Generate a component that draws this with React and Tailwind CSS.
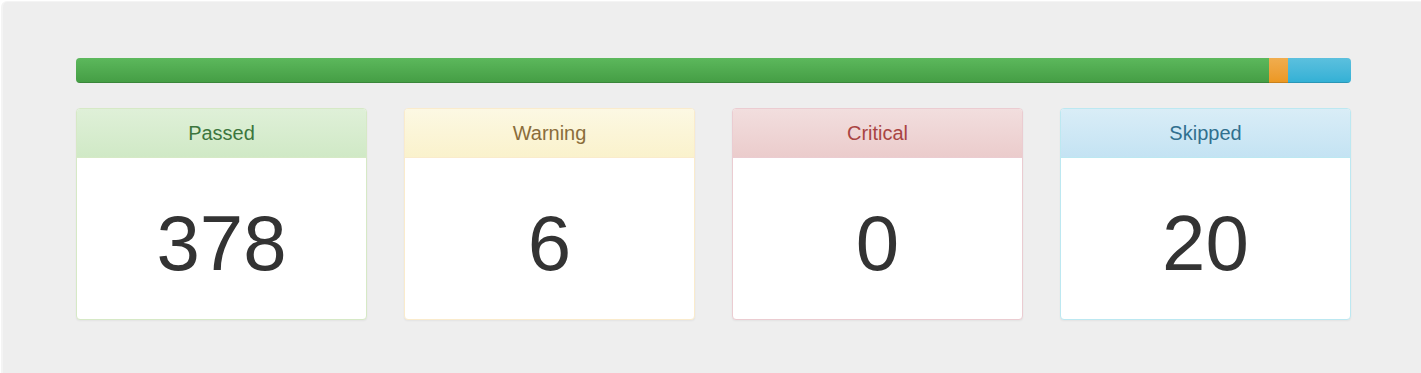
import React from 'react';

const results = [
  {
    label: 'Passed',
    count: 378,
    heading: 'bg-gradient-to-b from-[#dff0d8] to-[#d0e9c6] text-[#3c763d] border-[#d6e9c6]',
    border: 'border-[#d6e9c6]',
    bar: 'bg-gradient-to-b from-[#5cb85c] to-[#449d44]',
  },
  {
    label: 'Warning',
    count: 6,
    heading: 'bg-gradient-to-b from-[#fcf8e3] to-[#faf2cc] text-[#8a6d3b] border-[#faebcc]',
    border: 'border-[#faebcc]',
    bar: 'bg-gradient-to-b from-[#f0ad4e] to-[#ec971f]',
  },
  {
    label: 'Critical',
    count: 0,
    heading: 'bg-gradient-to-b from-[#f2dede] to-[#ebcccc] text-[#a94442] border-[#ebccd1]',
    border: 'border-[#ebccd1]',
    bar: 'bg-gradient-to-b from-[#d9534f] to-[#c9302c]',
  },
  {
    label: 'Skipped',
    count: 20,
    heading: 'bg-gradient-to-b from-[#d9edf7] to-[#c4e3f3] text-[#31708f] border-[#bce8f1]',
    border: 'border-[#bce8f1]',
    bar: 'bg-gradient-to-b from-[#5bc0de] to-[#31b0d5]',
  },
];

const total = results.reduce((sum, r) => sum + r.count, 0);

const ResultPanel = ({ label, count, heading, border }) => (
  <div className={`flex flex-col rounded-[4px] border bg-white shadow-[0_1px_2px_rgba(0,0,0,0.05)] ${border}`}>
    <div className={`h-[49px] flex items-center justify-center rounded-t-[3px] border-b text-[20px] ${heading}`}>
      {label}
    </div>
    <div className="h-[161px] flex items-center justify-center pt-[8px] text-[78px] leading-none text-[#333]">
      {count}
    </div>
  </div>
);

const App = () => {
  return (
    <div className="h-[373px] bg-white font-['Liberation_Sans',Arial,sans-serif]">
      <div className="h-full ml-px mt-px rounded-tl-[6px] border-l-2 border-t border-[#f4f4f4] bg-[#eee] pl-[73px] pr-[70px] pt-[56px]">
        <div className="flex h-[25px] overflow-hidden rounded-[4px] bg-gradient-to-b from-[#ebebeb] to-[#f5f5f5] shadow-[inset_0_1px_2px_rgba(0,0,0,0.1)]">
          {results.map((r) =>
            r.count > 0 ? (
              <div
                key={r.label}
                className={`h-full shadow-[inset_0_-1px_0_rgba(0,0,0,0.15)] ${r.bar}`}
                style={{ width: `${(r.count / total) * 100}%` }}
              />
            ) : null
          )}
        </div>
        <div className="grid grid-cols-4 gap-[37px] mt-[25px]">
          {results.map((r) => (
            <ResultPanel key={r.label} {...r} />
          ))}
        </div>
      </div>
    </div>
  );
};

export default App;
